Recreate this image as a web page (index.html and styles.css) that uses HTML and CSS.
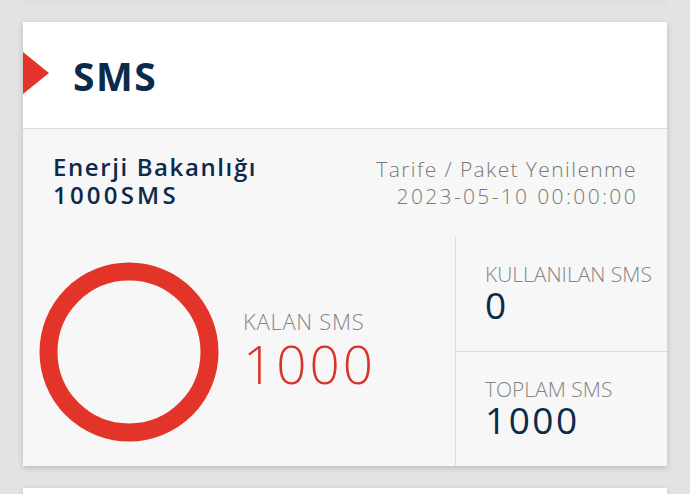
FILE: index.html
```html
<!DOCTYPE html>
<html lang="tr">
<head>
  <meta charset="UTF-8" />
  <meta name="viewport" content="width=device-width, initial-scale=1.0" />
  <title>SMS</title>
  <link rel="stylesheet" href="styles.css">
</head>
<body>
  <div class="page">
    <div class="card card-prev"></div>

    <div class="card">
      <div class="card-head">
        <span class="marker"></span>
        <h2>SMS</h2>
      </div>
      <div class="card-body">
        <div class="plan">
          <div class="plan-name">
            <div>Enerji Bakanlığı</div>
            <div class="digits">1000SMS</div>
          </div>
          <div class="plan-renew">
            <div>Tarife / Paket Yenilenme</div>
            <div class="digits">2023-05-10 00:00:00</div>
          </div>
        </div>
        <div class="stats">
          <div class="remaining">
            <svg class="ring" width="180" height="180" viewBox="0 0 180 180">
              <circle cx="90" cy="90" r="80.5" fill="none" stroke="#e3342a" stroke-width="18" />
            </svg>
            <div class="stat">
              <div class="label big">KALAN SMS</div>
              <div class="value red">1000</div>
            </div>
          </div>
          <div class="side">
            <div class="stat cell">
              <div class="label">KULLANILAN SMS</div>
              <div class="value small">0</div>
            </div>
            <div class="stat cell">
              <div class="label">TOPLAM SMS</div>
              <div class="value small">1000</div>
            </div>
          </div>
        </div>
      </div>
    </div>

    <div class="card card-next"></div>
  </div>
</body>
</html>
```

FILE: styles.css
```css
body {
  font-family: 'Open Sans', sans-serif;
  margin: 0;
  padding: 0;
  background-color: #e3e3e3;
  color: #0b2a4c;
  overflow: hidden;
}
.page {
  padding: 0 23px;
}
.card {
  background-color: white;
  box-shadow: 0 2px 6px rgba(0, 0, 0, 0.18);
}
.card-prev {
  height: 1px;
  margin-top: -1px;
  margin-bottom: 22px;
}
.card-next {
  height: 6px;
  margin-top: 22px;
}
.card-head {
  display: flex;
  align-items: center;
  height: 106px;
  border-bottom: 1px solid #dcdcdc;
}
.marker {
  width: 0;
  height: 0;
  border-left: 26px solid #e3342a;
  border-top: 21px solid transparent;
  border-bottom: 21px solid transparent;
  margin-top: -4px;
}
.card-head h2 {
  margin: 0 0 0 24px;
  font-size: 39px;
  font-weight: 700;
  letter-spacing: 1.5px;
  color: #0b2a4c;
}
.card-body {
  background-color: #f7f7f7;
}
.plan {
  display: flex;
  justify-content: space-between;
  padding: 24px 30px 0 30px;
  height: 84px;
}
.plan-name {
  font-size: 24px;
  font-weight: 600;
  line-height: 28px;
  letter-spacing: 1.6px;
}
.plan-name .digits {
  letter-spacing: 3.2px;
}
.plan-renew {
  margin-top: 3px;
  font-size: 21px;
  font-weight: 300;
  line-height: 27px;
  letter-spacing: 1.4px;
  color: #777;
  text-align: right;
}
.plan-renew .digits {
  letter-spacing: 2.35px;
  margin-right: -1px;
}
.stats {
  display: grid;
  grid-template-columns: 1fr 212px;
  height: 229px;
}
.remaining {
  display: flex;
  align-items: center;
  padding-left: 16px;
}
.ring {
  display: block;
}
.remaining .stat {
  margin-left: 24px;
  margin-top: -6px;
}
.side {
  display: grid;
  grid-template-rows: 114px 1fr;
  border-left: 1px solid #dcdcdc;
}
.cell {
  display: flex;
  flex-direction: column;
  justify-content: center;
  padding-left: 29px;
  padding-bottom: 4px;
}
.cell + .cell {
  border-top: 1px solid #dcdcdc;
}
.label {
  font-size: 21px;
  font-weight: 300;
  color: #858585;
  line-height: 26px;
}
.label.big {
  font-size: 22px;
  letter-spacing: 0.7px;
}
.value {
  font-weight: 300;
  line-height: 1;
}
.value.red {
  font-size: 53px;
  letter-spacing: 3px;
  color: #d9342b;
  margin-top: 3px;
}
.value.small {
  font-size: 37px;
  letter-spacing: 2.5px;
  color: #0b2a4c;
  font-weight: 400;
  margin-top: -1px;
}
```
